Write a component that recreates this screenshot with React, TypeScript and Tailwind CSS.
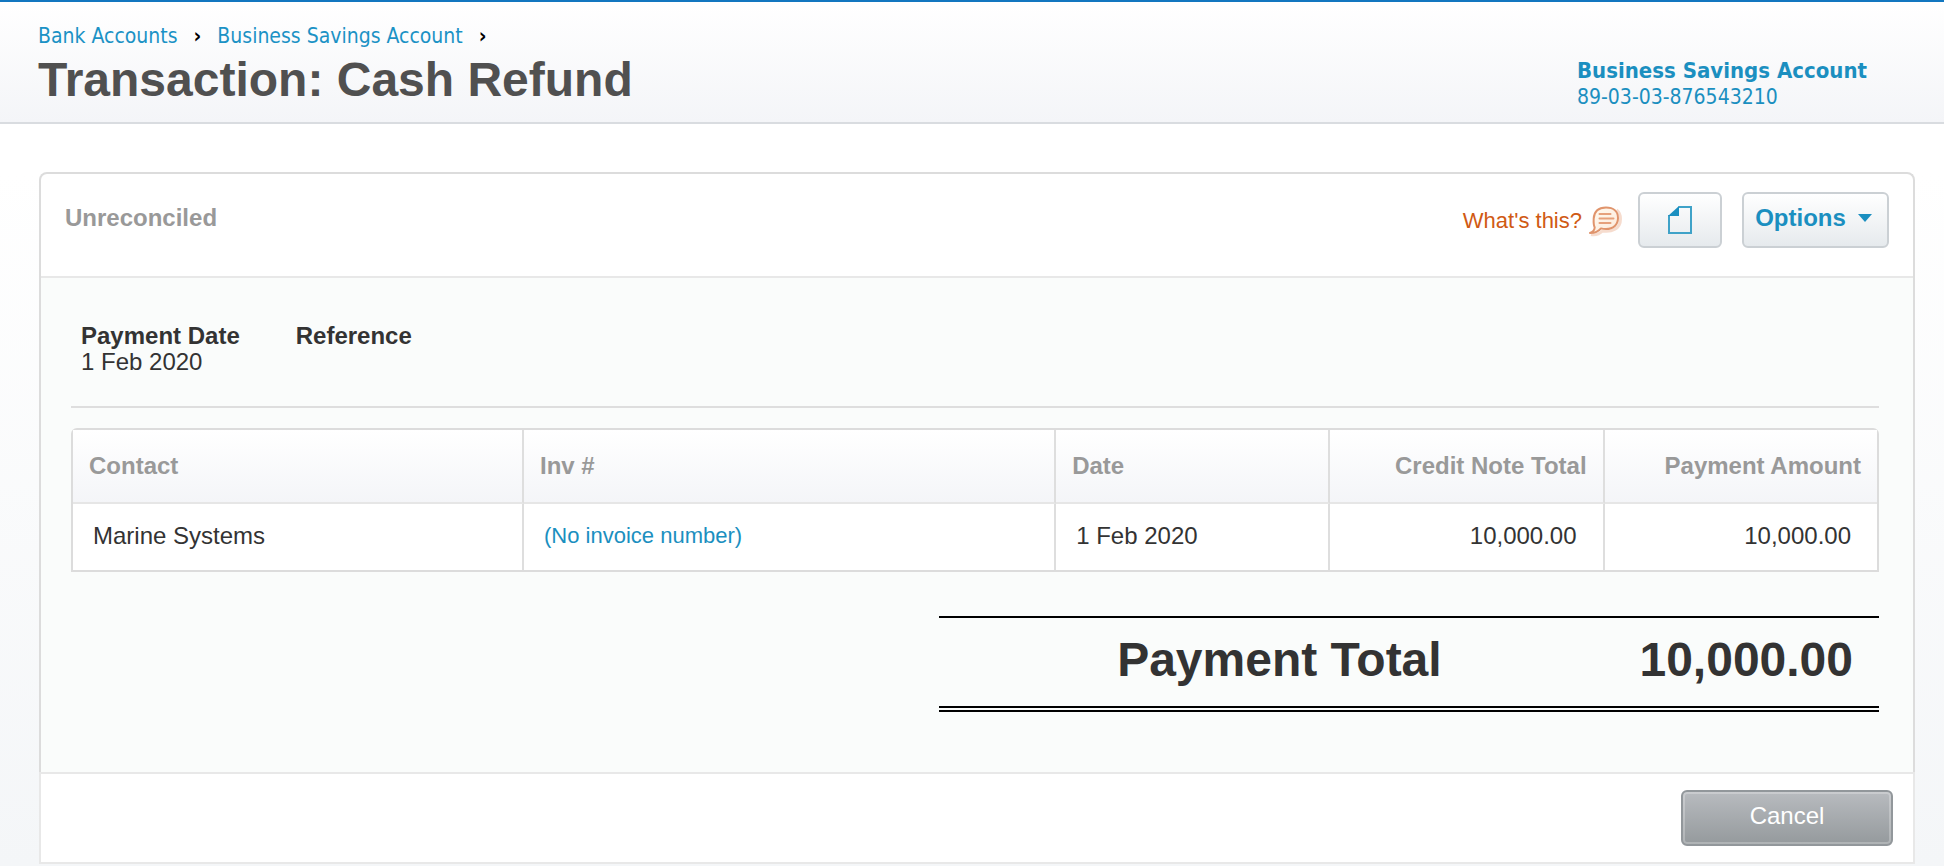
import React from "react";

interface Payment {
  contact: string;
  invoice: string;
  date: string;
  creditTotal: string;
  amount: string;
}

const crumbs = ["Bank Accounts", "Business Savings Account"];

const payments: Payment[] = [
  {
    contact: "Marine Systems",
    invoice: "(No invoice number)",
    date: "1 Feb 2020",
    creditTotal: "10,000.00",
    amount: "10,000.00",
  },
];

const CommentIcon = () => (
  <svg width="34" height="32" viewBox="0 0 34 32" fill="none">
    <defs>
      <linearGradient id="bubble" x1="0" y1="0" x2="1" y2="1">
        <stop offset="0" stopColor="#fffaf0" />
        <stop offset="1" stopColor="#fdeadb" />
      </linearGradient>
    </defs>
    {/* soft shadow on the right and under the tail */}
    <path
      d="M3 29.500c6 1 9-1 11.500-3.500 9 1.500 18-2 18-12 0-4-1.500-7-4-9"
      stroke="#f0c4ae"
      strokeWidth="3"
      opacity="0.6"
    />
    <path
      d="M18 2.500c7.500 0 12 4 12 10.500s-4.500 11-12 11c-2 0-3.500-.2-5-.6-2 2.500-6 4.600-11 4.600 3-1.200 4.500-3 4.700-5.500C5.500 20 5.500 17 5.700 13.500 6.200 6.500 10.500 2.500 18 2.500z"
      fill="url(#bubble)"
      stroke="#e0946c"
      strokeWidth="2"
      strokeLinejoin="round"
    />
    <path
      d="M11.500 9h11M11.500 13.500h14M11.500 18h11"
      stroke="#e6a17c"
      strokeWidth="2"
      strokeLinecap="round"
    />
  </svg>
);

const PageIcon = () => (
  <svg width="24" height="28" viewBox="0 0 24 28" fill="none">
    <path d="M1 9v18h22V1H10.500" stroke="#3fa2c8" strokeWidth="2" />
    <path d="M11 0v10H0z" fill="#1b8fc0" />
  </svg>
);

const Header = () => (
  <header className="flex justify-between border-t-2 border-b-2 border-t-[#1277c0] border-b-[#d9dce0] bg-linear-to-b from-white to-[#f4f5f8] pl-[38px]">
    <div className="pt-5 pb-3">
      <nav className="flex items-center gap-4 font-['DejaVu_Sans_Condensed','DejaVu_Sans',sans-serif] text-[21px] leading-7">
        {crumbs.map((item) => (
          <React.Fragment key={item}>
            <a href="#" className="text-[#1b92c5]">
              {item}
            </a>
            <span className="font-bold text-black">›</span>
          </React.Fragment>
        ))}
      </nav>
      <h1 className="text-[48px] leading-[60px] font-bold text-[#505050]">
        Transaction: Cash Refund
      </h1>
    </div>
    <a
      href="#"
      className="w-[367px] pt-14 font-['DejaVu_Sans_Condensed','DejaVu_Sans',sans-serif] text-[21px] leading-[26px] text-[#1b8fc0]"
    >
      <span className="block text-[22px] font-bold">
        Business Savings Account
      </span>
      <span className="block">89-03-03-876543210</span>
    </a>
  </header>
);

const PaymentTable = () => {
  const head =
    "border-r-2 border-b-2 border-r-[#dedede] border-b-[#e6e6e6] px-4 font-bold last:border-r-0";
  const cell = "border-r-2 border-[#dedede] pb-0.5 last:border-r-0";

  return (
    <table className="mt-5 w-full table-fixed border-separate border-spacing-0 rounded-t-md border-2 border-[#dcdcdc] bg-white">
      <colgroup>
        <col className="w-[25%]" />
        <col className="w-[29.500%]" />
        <col className="w-[15.200%]" />
        <col className="w-[15.200%]" />
        <col />
      </colgroup>
      <thead className="bg-linear-to-b from-white to-[#f4f5f8] text-[#999999]">
        <tr className="h-[74px] text-left">
          <th className={head}>Contact</th>
          <th className={head}>Inv #</th>
          <th className={head}>Date</th>
          <th className={`${head} text-right`}>Credit Note Total</th>
          <th className={`${head} text-right`}>Payment Amount</th>
        </tr>
      </thead>
      <tbody>
        {payments.map((item, index) => (
          <tr className="h-[66px]" key={index}>
            <td className={`${cell} px-5`}>{item.contact}</td>
            <td className={`${cell} px-5 text-[22px]`}>
              <a href="#" className="text-[#1b8fc0]">
                {item.invoice}
              </a>
            </td>
            <td className={`${cell} px-5`}>{item.date}</td>
            <td className={`${cell} px-[26px] text-right`}>
              {item.creditTotal}
            </td>
            <td className={`${cell} px-[26px] text-right`}>{item.amount}</td>
          </tr>
        ))}
      </tbody>
    </table>
  );
};

const App = () => {
  const toolButton =
    "flex h-14 items-center justify-center rounded-md border-2 border-[#cbd0d4] bg-linear-to-b from-white to-[#e6eaed]";

  return (
    <div className="min-h-screen bg-linear-to-b from-white from-20% to-[#f4f6f8] font-['Liberation_Sans',Arial,sans-serif] text-[24px] leading-[26px] text-[#333333]">
      <Header />

      <main className="mt-12 mr-[29px] ml-[39px]">
        <section className="rounded-t-lg border-2 border-b-0 border-[#dcdcdc] bg-white">
          <div className="flex items-start justify-between border-b-2 border-[#e8e8e8] pt-[18px] pr-6 pb-7 pl-6">
            <div className="flex h-14 items-center pb-1 font-bold text-[#999999]">
              Unreconciled
            </div>
            <div className="flex items-center gap-4">
              <a
                href="#"
                className="flex items-center gap-1.5 pt-0.5 text-[22px] text-[#d05a14]"
              >
                What&apos;s this?
                <CommentIcon />
              </a>
              <div className="flex gap-5">
                <button
                  type="button"
                  aria-label="Notes"
                  className={`${toolButton} w-[84px]`}
                >
                  <PageIcon />
                </button>
                <button
                  type="button"
                  className={`${toolButton} w-[147px] gap-3 pr-1 pb-1 font-bold text-[#1b8fc0]`}
                >
                  Options
                  <svg width="14" height="8" viewBox="0 0 14 8">
                    <path d="M0 0h14L7 8z" fill="#1b8fc0" />
                  </svg>
                </button>
              </div>
            </div>
          </div>

          <div className="bg-[#fafcfb] pt-[45px] pr-[34px] pb-[60px] pl-[30px]">
            <dl className="flex gap-14 border-b-2 border-[#dedede] px-[10px] pb-[31px]">
              <div>
                <dt className="font-bold">Payment Date</dt>
                <dd>1 Feb 2020</dd>
              </div>
              <div>
                <dt className="font-bold">Reference</dt>
                <dd></dd>
              </div>
            </dl>

            <PaymentTable />

            <div className="mt-11 ml-auto flex w-[52%] justify-end border-t-2 border-b-6 border-t-black border-b-black pt-4 pr-[26px] pb-5 text-[48px] leading-[52px] font-bold [border-bottom-style:double]">
              <span>Payment Total</span>
              <span className="w-[45%] text-right">10,000.00</span>
            </div>
          </div>
        </section>

        <footer className="flex justify-end border-2 border-[#e8e8e8] bg-white px-5 py-4">
          <button
            type="button"
            className="h-14 w-[212px] rounded-md border-2 border-[#92979b] bg-linear-to-b from-[#b8bbbf] to-[#959a9d] pb-1 text-white inset-ring-2 inset-ring-[#ffffff40]"
          >
            Cancel
          </button>
        </footer>
      </main>
    </div>
  );
};

export default App;
